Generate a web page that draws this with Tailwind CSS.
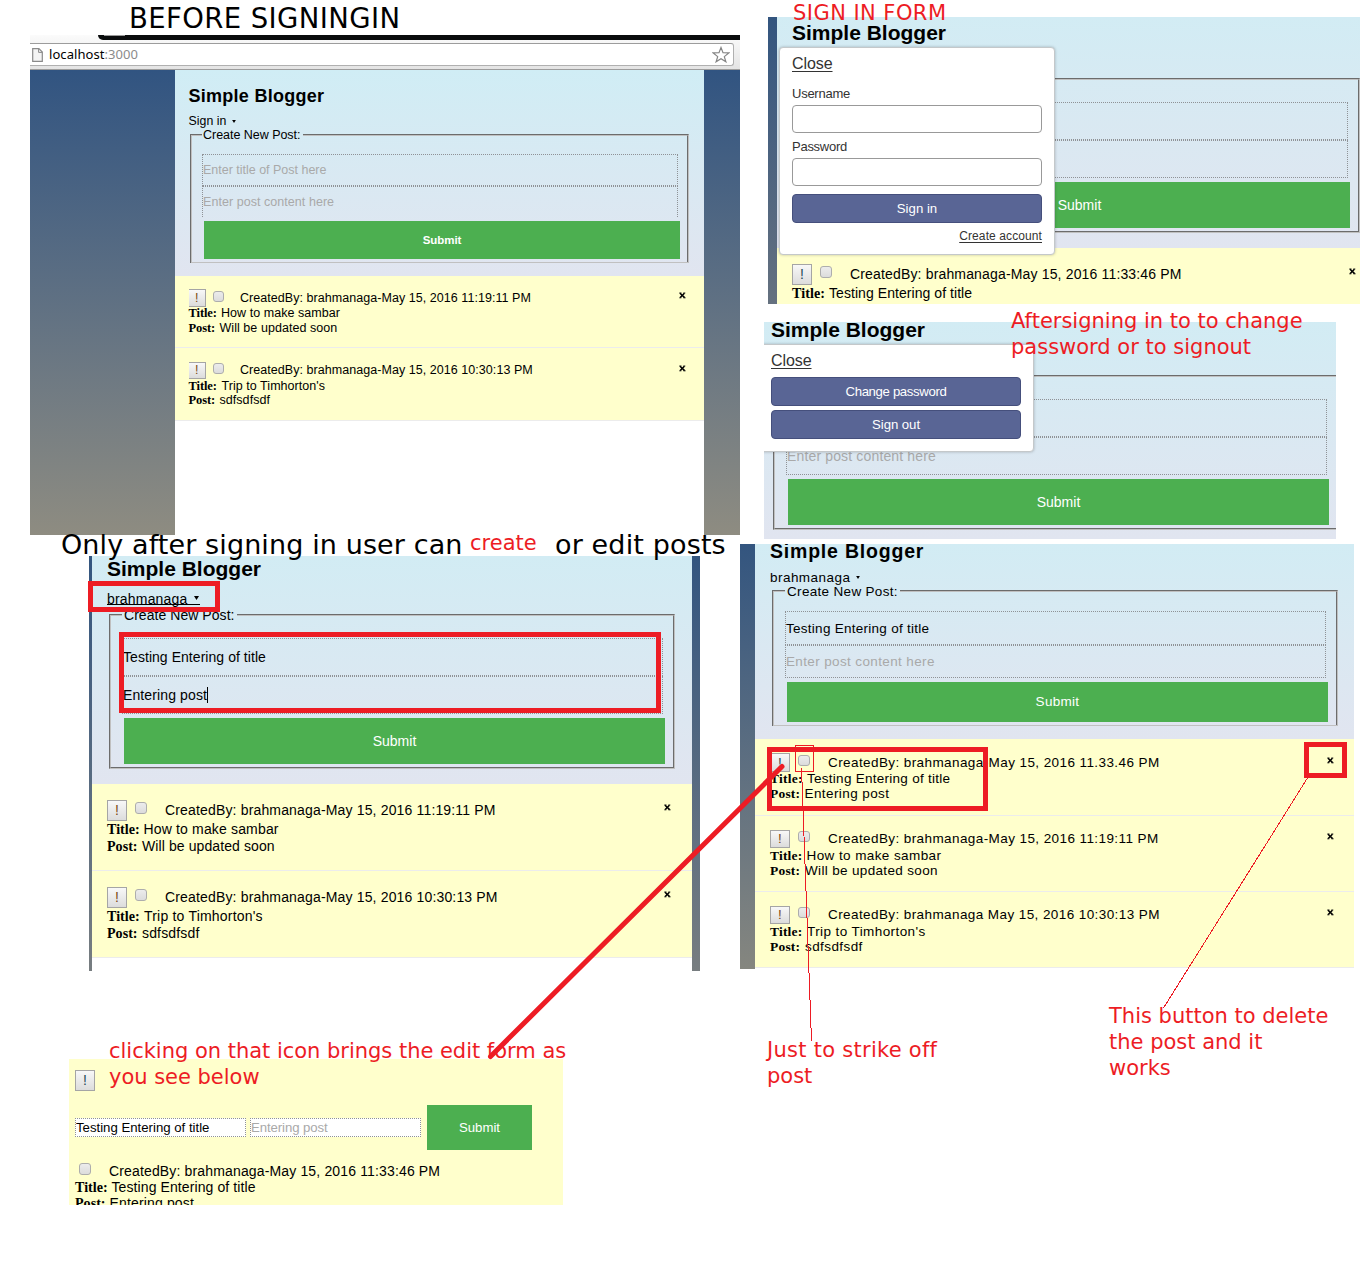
<!DOCTYPE html>
<html lang="en">
<head>
<meta charset="utf-8">
<title>Simple Blogger walkthrough</title>
<script src="https://cdn.jsdelivr.net/npm/@tailwindcss/browser@4"></script>
</head>
<body class="bg-white">
<svg class="hidden">
  <symbol id="x" viewBox="0 0 7 7"><path d="M1 1.2 L5.6 5.6 M5.4 1.2 L1.2 5.6" stroke="#000" stroke-width="1.5" fill="none"/><path d="M0.3 1h2.2M4.4 1h1.9M0.3 5.8h2.1M4.4 5.8h2.2" stroke="#000" stroke-width=".9"/></symbol>
  <symbol id="tri" viewBox="0 0 5 4"><path d="M0 0h5L2.5 4z" fill="#000"/></symbol>
</svg>
<main class="relative w-[1360px] h-[1285px] overflow-hidden bg-white text-black whitespace-nowrap font-['Liberation_Sans',sans-serif]">

  <!-- Before signing in -->
  <section class="absolute left-[30px] top-[35px] w-[710px] h-[500px] overflow-hidden flex flex-col text-[12.5px] tracking-[0.05px]">
    <div class="h-[35px] shrink-0 flex flex-col bg-linear-to-b from-[#fbfbfb] to-[#e4e4e4] border-b border-[#9d9d9d]">
      <div class="h-[5px] flex justify-end"><div class="w-[642px] h-[5px] bg-[#0a0c0d] rounded-bl-[5px]"><div class="ml-[6px] w-[21px] h-px bg-[#999]"></div></div></div>
      <div class="mt-[3px] -ml-2 w-[712px] h-[23px] bg-white border border-[#b0b0b0] border-t-[#9c9c9c] rounded-[3px] flex items-center pl-[9px] pr-[3px]">
        <svg class="w-[11px] h-[14px]" viewBox="0 0 11 14"><path d="M.7.7h6.2l3.4 3.4v9.2H.7z" fill="#f4f4f4" stroke="#8a8a8a" stroke-width="1.2"/><path d="M6.6.8v3.6h3.6" fill="none" stroke="#8a8a8a"/></svg>
        <span class="ml-[6px] -mt-[2px] font-['Noto_Sans',sans-serif] text-[13px] tracking-[0.06px] leading-[20px]">localhost<span class="text-[#8b8b8b]">:3000</span></span>
        <svg class="ml-auto w-[18px] h-[17px]" viewBox="0 0 18 17"><path d="M9 1.5l2 5.2 5.8.2-4.5 3.7 1.6 5.2L9 12.8l-4.9 3 1.6-5.2L1.2 6.9 7 6.7z" fill="none" stroke="#858585" stroke-width="1.2"/></svg>
      </div>
    </div>
    <div class="flex-1 bg-linear-to-b from-[#315481] to-[#8e8c81]">
      <div class="ml-[145px] w-[529px] h-full bg-white">
        <header class="h-[206px] pt-4 pl-[13px] bg-linear-to-b from-[#d0edf5] to-[#e1e5f0]">
          <h1 class="pl-[0.5px] font-bold text-[18px] tracking-[0.27px] leading-[21px]">Simple Blogger</h1>
          <div class="mt-[7px] pl-[0.5px] h-[14px] leading-[15px] flex items-center text-[12.3px]">Sign in<svg class="ml-[6px] w-[4px] h-[3px]"><use href="#tri"/></svg></div>
          <fieldset class="ml-[2px] w-[499px] h-[135px] border-2 border-b border-[#c0c0c0] [border-style:groove_groove_solid_groove]">
            <legend class="ml-[10px] pl-px w-[101px] h-[14px] leading-[14px] tracking-[-0.03px]">Create New Post:</legend>
            <div class="mt-3 ml-[10px] w-[476px] h-8 border border-dotted border-[#8f9296] leading-[31px] text-[#a9a9a9] tracking-[-0.01px]">Enter title of Post here</div>
            <div class="ml-[10px] w-[476px] h-[31px] border border-b-0 border-dotted border-[#8f9296] leading-[31px] text-[#a9a9a9]">Enter post content here</div>
            <div class="mt-1 ml-3 w-[476px] h-[38px] bg-[#4caf50] text-white text-center font-bold text-[11.5px] tracking-[-0.08px] leading-[38px]">Submit</div>
          </fieldset>
        </header>
        <article class="h-[72px] pt-[13px] pl-[13.5px] bg-[#ffffcc] border-b border-[#ececec]">
          <div class="flex h-[18px] leading-[18px]">
            <span class="w-[17.5px] h-[18px] border border-l-0 border-[#a5a5a5] bg-linear-to-b from-[#f8f8f8] to-[#dcdcdc] text-center leading-[16px] text-[#7a4a12]">!</span>
            <span class="ml-[7px] mt-[2px] w-[11px] h-[11px] rounded-[3px] border border-[#adadad] bg-linear-to-b from-[#ececec] to-[#dcdcdc]"></span>
            <span class="ml-[16px]">CreatedBy: brahmanaga-May 15, 2016 11:19:11 PM</span>
            <svg class="ml-auto mr-[18px] mt-[3px] w-[7px] h-[7px]"><use href="#x"/></svg>
          </div>
          <div class="-mt-[2px] flex h-[15px] leading-[16px]"><b class="w-[32.5px] font-['Liberation_Serif',serif] tracking-[-0.1px]">Title:</b>How to make sambar</div>
          <div class="flex h-[15px] leading-[16px]"><b class="w-[31px] font-['Liberation_Serif',serif] tracking-[-0.1px]">Post:</b>Will be updated soon</div>
        </article>
        <article class="h-[73px] pt-[14px] pl-[13.5px] bg-[#ffffcc] border-b border-[#ececec]">
          <div class="flex h-[18px] leading-[17px]">
            <span class="w-[17.5px] h-[17px] border border-l-0 border-[#a5a5a5] bg-linear-to-b from-[#f8f8f8] to-[#dcdcdc] text-center leading-[15px] text-[#7a4a12]">!</span>
            <span class="ml-[7px] mt-px w-[11px] h-[11px] rounded-[3px] border border-[#adadad] bg-linear-to-b from-[#ececec] to-[#dcdcdc]"></span>
            <span class="ml-[16px]">CreatedBy: brahmanaga-May 15, 2016 10:30:13 PM</span>
            <svg class="ml-auto mr-[18px] mt-[3px] w-[7px] h-[7px]"><use href="#x"/></svg>
          </div>
          <div class="-mt-[2px] flex h-[14px] leading-[16px]"><b class="w-[33px] font-['Liberation_Serif',serif] tracking-[-0.1px]">Title:</b>Trip to Timhorton's</div>
          <div class="flex h-[15px] leading-[16px]"><b class="w-[31px] font-['Liberation_Serif',serif] tracking-[-0.1px]">Post:</b>sdfsdfsdf</div>
        </article>
      </div>
    </div>
  </section>

  <!-- Sign in form -->
  <section class="absolute left-[768px] top-[17px] w-[592px] h-[287px] overflow-hidden pl-[9px] bg-linear-to-b from-[#33557f] to-[#65717f] text-[14px] tracking-[0.16px]">
    <header class="h-[231px] pt-1 pl-[15px] bg-linear-to-b from-[#d2ecf4] to-[#e1e5f0]">
      <h1 class="font-bold text-[21px] tracking-normal leading-[24px]">Simple Blogger</h1>
      <div class="mt-[33px] ml-[2px] w-[566px] h-[155px] border-2 border-[#c0c0c0] [border-style:groove] pt-[22px]">
        <div class="ml-[11px] w-[541px] h-[38px] border border-dotted border-[#8f9296]"></div>
        <div class="ml-[11px] w-[541px] h-[38px] border border-dotted border-[#8f9296]"></div>
        <div class="mt-1 ml-[13px] w-[541px] h-[46px] bg-[#4caf50] text-white text-center tracking-normal leading-[46px]">Submit</div>
      </div>
    </header>
    <article class="h-[56px] pt-4 pl-[15px] bg-[#ffffcc]">
      <div class="flex h-[21px] leading-[20px]">
        <span class="w-5 h-[21px] border border-[#a5a5a5] bg-linear-to-b from-[#f8f8f8] to-[#dcdcdc] text-center leading-[19px] text-[#1d4a55]">!</span>
        <span class="ml-2 mt-[2px] w-3 h-3 rounded-[3px] border border-[#adadad] bg-linear-to-b from-[#ececec] to-[#dcdcdc]"></span>
        <span class="ml-[18px]">CreatedBy: brahmanaga-May 15, 2016 11:33:46 PM</span>
        <svg class="ml-auto mr-1 mt-1 w-[7px] h-[7px]"><use href="#x"/></svg>
      </div>
      <div class="flex h-[17px] leading-[17px] tracking-[0.06px]"><b class="w-[37px] font-['Liberation_Serif',serif] text-[14.1px]">Title:</b>Testing Entering of title</div>
    </article>
  </section>
  <div class="absolute left-[779px] top-[47px] w-[276px] h-[208px] bg-white border border-[#c4c8ca] rounded-[4px] shadow-[0_0_3px_rgba(0,0,0,0.25)] px-3 pt-[6px] text-[#333]">
    <div class="text-[16px] leading-[19px] tracking-[-0.08px] underline underline-offset-2">Close</div>
    <div class="mt-[13px] text-[13px] tracking-[-0.25px] leading-[16px]">Username</div>
    <div class="mt-[3px] h-7 border border-[#999] rounded-[4px]"></div>
    <div class="mt-[6px] text-[13px] tracking-[-0.26px] leading-[16px]">Password</div>
    <div class="mt-[3px] h-7 border border-[#999] rounded-[4px]"></div>
    <div class="mt-2 h-[29px] border border-[#454f7c] rounded-[4px] bg-[#596595] text-white text-center text-[13.2px] leading-[27px]">Sign in</div>
    <div class="mt-[5px] text-right text-[12px] tracking-[0.1px] leading-[16px] underline underline-offset-2">Create account</div>
  </div>

  <!-- Signed-in account menu -->
  <section class="absolute left-[764px] top-[322px] w-[572px] h-[217px] overflow-hidden pl-[6px] bg-linear-to-b from-[#d2ecf4] to-[#e1e5f0] text-[14px] tracking-[0.15px]">
    <h1 class="-mt-[5px] pl-px font-bold text-[21px] tracking-normal leading-[25px]">Simple Blogger</h1>
    <div class="mt-[33px] ml-[3px] w-[575px] h-[155px] border-2 border-[#c0c0c0] [border-style:groove] pt-[22px]">
      <div class="ml-[11px] w-[541px] h-[38px] border border-dotted border-[#8f9296]"></div>
      <div class="ml-[11px] w-[541px] h-[38px] border border-dotted border-[#8f9296] leading-[37px] text-[#a9a9a9]">Enter post content here</div>
      <div class="mt-1 ml-[13px] w-[541px] h-[46px] bg-[#4caf50] text-white text-center tracking-normal leading-[46px]">Submit</div>
    </div>
    <div class="absolute -left-[6px] top-[22px] w-[276px] h-[108px] bg-white border border-[#c4c8ca] rounded-[4px] shadow-[0_0_3px_rgba(0,0,0,0.25)] px-3 pt-[6px] text-[#333]">
      <div class="text-[16px] leading-[19px] tracking-[-0.08px] underline underline-offset-2">Close</div>
      <div class="mt-[7px] h-[29px] border border-[#454f7c] rounded-[4px] bg-[#596595] text-white text-center text-[13.2px] tracking-[-0.35px] leading-[27px]">Change password</div>
      <div class="mt-1 h-[29px] border border-[#454f7c] rounded-[4px] bg-[#596595] text-white text-center text-[13.2px] tracking-[-0.05px] leading-[27px]">Sign out</div>
    </div>
  </section>

  <!-- Creating a post -->
  <section class="absolute left-[89px] top-[556px] w-[611px] h-[415px] overflow-hidden pl-[3px] pr-2 bg-linear-to-b from-[#33557f] to-[#777d80] text-[14px] tracking-[0.16px]">
    <div class="h-full bg-white">
      <header class="h-[228px] pl-[15px] bg-linear-to-b from-[#d2ecf4] to-[#e1e5f0]">
        <h1 class="font-bold text-[21px] tracking-normal leading-[25px]">Simple Blogger</h1>
        <div class="mt-[9px] h-[18px] flex"><span class="h-[15px] w-[93px] pt-[3px] leading-[18px] border-b border-black flex items-center tracking-[0.19px]">brahmanaga<svg class="ml-[6px] -mt-px w-[5px] h-[4px]"><use href="#tri"/></svg></span></div>
        <fieldset class="-mt-[2px] ml-[2px] w-[566px] h-[163px] border-2 border-[#c0c0c0] [border-style:groove]">
          <legend class="ml-[11px] pl-[2px] w-[115px] h-[18px] leading-[18px] tracking-[0.05px]">Create New Post:</legend>
          <div class="mt-[14px] ml-[11px] w-[541px] h-[38px] border border-dotted border-[#8f9296] leading-[36px] tracking-[0.05px]">Testing Entering of title</div>
          <div class="ml-[11px] w-[541px] h-[38px] border border-dotted border-[#8f9296] leading-[37px] flex items-center"><span class="h-4 leading-4 border-r border-black tracking-[0.12px]">Entering post</span></div>
          <div class="mt-1 ml-[13px] w-[541px] h-[46px] bg-[#4caf50] text-white text-center tracking-normal leading-[46px]">Submit</div>
        </fieldset>
      </header>
      <article class="h-[87px] pt-4 pl-[15px] bg-[#ffffcc] border-b border-[#ececec]">
        <div class="flex h-[21px] leading-[20px]">
          <span class="w-5 h-[21px] border border-[#a5a5a5] bg-linear-to-b from-[#f8f8f8] to-[#dcdcdc] text-center leading-[19px] text-[#7a4a12]">!</span>
          <span class="ml-2 mt-[2px] w-3 h-3 rounded-[3px] border border-[#adadad] bg-linear-to-b from-[#ececec] to-[#dcdcdc]"></span>
          <span class="ml-[18px]">CreatedBy: brahmanaga-May 15, 2016 11:19:11 PM</span>
          <svg class="ml-auto mr-[21px] mt-1 w-[7px] h-[7px]"><use href="#x"/></svg>
        </div>
        <div class="flex h-[17px] leading-[17px]"><b class="w-[36.5px] font-['Liberation_Serif',serif] text-[14.1px] tracking-normal">Title:</b>How to make sambar</div>
        <div class="flex h-[17px] leading-[17px]"><b class="w-[35px] font-['Liberation_Serif',serif] text-[14.1px] tracking-normal">Post:</b><span class="tracking-[0.1px]">Will be updated soon</span></div>
      </article>
      <article class="h-[87px] pt-4 pl-[15px] bg-[#ffffcc] border-b border-[#ececec]">
        <div class="flex h-[21px] leading-[20px]">
          <span class="w-5 h-[21px] border border-[#a5a5a5] bg-linear-to-b from-[#f8f8f8] to-[#dcdcdc] text-center leading-[19px] text-[#7a4a12]">!</span>
          <span class="ml-2 mt-[2px] w-3 h-3 rounded-[3px] border border-[#adadad] bg-linear-to-b from-[#ececec] to-[#dcdcdc]"></span>
          <span class="ml-[18px]">CreatedBy: brahmanaga-May 15, 2016 10:30:13 PM</span>
          <svg class="ml-auto mr-[21px] mt-1 w-[7px] h-[7px]"><use href="#x"/></svg>
        </div>
        <div class="flex h-[17px] leading-[17px]"><b class="w-[37px] font-['Liberation_Serif',serif] text-[14.1px] tracking-normal">Title:</b><span class="tracking-[0.2px]">Trip to Timhorton's</span></div>
        <div class="flex h-[17px] leading-[17px]"><b class="w-[35px] font-['Liberation_Serif',serif] text-[14.1px] tracking-normal">Post:</b>sdfsdfsdf</div>
      </article>
    </div>
  </section>

  <!-- Post list after creating -->
  <section class="absolute left-[740px] top-[544px] w-[614px] h-[425px] overflow-hidden pl-[15px] bg-linear-to-b from-[#33557f] to-[#85867f] text-[13.5px] tracking-[0.41px]">
    <div class="h-full bg-white">
      <header class="h-[195px] pl-[15px] bg-linear-to-b from-[#d2ecf4] to-[#e1e5f0] flow-root">
        <h1 class="-mt-[3px] font-bold text-[19.5px] tracking-[0.8px] leading-5">Simple Blogger</h1>
        <div class="mt-[9px] h-[14px] leading-[15px] flex items-center tracking-[0.46px]">brahmanaga<svg class="ml-[6px] w-[4px] h-[3px]"><use href="#tri"/></svg></div>
        <fieldset class="-mt-px ml-[2px] w-[566px] h-[143px] border-2 border-b border-[#c0c0c0] [border-style:groove_groove_solid_groove]">
          <legend class="ml-[11px] pl-[2px] w-[115px] h-4 leading-[17px] tracking-[0.32px]">Create New Post:</legend>
          <div class="mt-3 ml-[11px] w-[541px] h-[34px] border border-dotted border-[#8f9296] leading-[33px] tracking-[0.27px]">Testing Entering of title</div>
          <div class="ml-[11px] w-[541px] h-[33px] border border-dotted border-[#8f9296] leading-[32px] text-[#a9a9a9] tracking-[0.37px]">Enter post content here</div>
          <div class="mt-1 ml-[13px] w-[541px] h-10 bg-[#4caf50] text-white text-center leading-10 tracking-[0.3px]">Submit</div>
        </fieldset>
      </header>
      <article class="h-[77px] pt-[14px] pl-[15px] bg-[#ffffcc] border-b border-[#ececec]">
        <div class="flex h-[19px] leading-[19px]">
          <span class="w-5 h-[19px] border border-[#a5a5a5] bg-linear-to-b from-[#f8f8f8] to-[#dcdcdc] text-center leading-[17px] text-[#1d4a55]">!</span>
          <span class="ml-2 mt-[2px] w-3 h-[11px] rounded-[3px] border border-[#adadad] bg-linear-to-b from-[#ececec] to-[#dcdcdc]"></span>
          <span class="ml-[18px]">CreatedBy: brahmanaga-May 15, 2016 11.33.46 PM</span>
          <svg class="ml-auto mr-5 mt-1 w-[7px] h-[7px]"><use href="#x"/></svg>
        </div>
        <div class="-mt-px flex h-[15px] leading-[15px] tracking-[0.27px]"><b class="w-[37px] font-['Liberation_Serif',serif]">Title:</b>Testing Entering of title</div>
        <div class="flex h-[15px] leading-[15px]"><b class="w-[34.5px] font-['Liberation_Serif',serif] tracking-[0.2px]">Post:</b>Entering post</div>
      </article>
      <article class="h-[76px] pt-[14px] pl-[15px] bg-[#ffffcc] border-b border-[#ececec]">
        <div class="flex h-[19px] leading-[18px]">
          <span class="w-5 h-[18px] border border-[#a5a5a5] bg-linear-to-b from-[#f8f8f8] to-[#dcdcdc] text-center leading-[16px] text-[#7a4a12]">!</span>
          <span class="ml-2 mt-px w-3 h-[11px] rounded-[3px] border border-[#adadad] bg-linear-to-b from-[#ececec] to-[#dcdcdc]"></span>
          <span class="ml-[18px]">CreatedBy: brahmanaga-May 15, 2016 11:19:11 PM</span>
          <svg class="ml-auto mr-5 mt-[3px] w-[7px] h-[7px]"><use href="#x"/></svg>
        </div>
        <div class="-mt-px flex h-[15px] leading-[15px]"><b class="w-[36.5px] font-['Liberation_Serif',serif] tracking-[0.2px]">Title:</b>How to make sambar</div>
        <div class="flex h-[15px] leading-[15px]"><b class="w-[35px] font-['Liberation_Serif',serif] tracking-[0.2px]">Post:</b><span class="tracking-[0.34px]">Will be updated soon</span></div>
      </article>
      <article class="h-[76px] pt-[14px] pl-[15px] bg-[#ffffcc] border-b border-[#ececec]">
        <div class="flex h-[19px] leading-[18px]">
          <span class="w-5 h-[18px] border border-[#a5a5a5] bg-linear-to-b from-[#f8f8f8] to-[#dcdcdc] text-center leading-[16px] text-[#7a4a12]">!</span>
          <span class="ml-2 mt-px w-3 h-[11px] rounded-[3px] border border-[#adadad] bg-linear-to-b from-[#ececec] to-[#dcdcdc]"></span>
          <span class="ml-[18px]">CreatedBy: brahmanaga May 15, 2016 10:30:13 PM</span>
          <svg class="ml-auto mr-5 mt-[3px] w-[7px] h-[7px]"><use href="#x"/></svg>
        </div>
        <div class="-mt-px flex h-[15px] leading-[15px]"><b class="w-[37px] font-['Liberation_Serif',serif] tracking-[0.2px]">Title:</b>Trip to Timhorton's</div>
        <div class="flex h-[15px] leading-[15px]"><b class="w-[35px] font-['Liberation_Serif',serif] tracking-[0.2px]">Post:</b>sdfsdfsdf</div>
      </article>
    </div>
  </section>

  <!-- Edit form -->
  <section class="absolute left-[69px] top-[1059px] w-[494px] h-[146px] overflow-hidden pl-[6px] pt-[11px] bg-[#ffffcc] text-[14px] tracking-[0.15px]">
    <div class="w-5 h-[21px] border border-[#a5a5a5] bg-linear-to-b from-[#f8f8f8] to-[#dcdcdc] text-center leading-[19px] text-[#1d4a55]">!</div>
    <div class="mt-[14px] h-[45px] flex items-center text-[13.2px] tracking-normal">
      <div class="w-[171px] h-[19px] bg-white border border-dotted border-[#8f9296] leading-[17px]">Testing Entering of title</div>
      <div class="ml-1 w-[171px] h-[19px] bg-white border border-dotted border-[#8f9296] leading-[17px] tracking-[-0.08px] text-[#a9a9a9]">Entering post</div>
      <div class="ml-[6px] w-[105px] h-[45px] bg-[#4caf50] text-white text-center leading-[45px]">Submit</div>
    </div>
    <div class="mt-[13px] h-4 flex leading-[16px]">
      <span class="ml-1 w-3 h-3 rounded-[3px] border border-[#adadad] bg-linear-to-b from-[#ececec] to-[#dcdcdc]"></span>
      <span class="ml-[18px]">CreatedBy: brahmanaga-May 15, 2016 11:33:46 PM</span>
    </div>
    <div class="h-4 flex leading-[17px] tracking-[0.1px]"><b class="w-[36.5px] font-['Liberation_Serif',serif] text-[14.1px] tracking-normal">Title:</b>Testing Entering of title</div>
    <div class="h-4 flex leading-[17px]"><b class="w-[34.5px] font-['Liberation_Serif',serif] text-[14.1px] tracking-normal">Post:</b>Entering post</div>
  </section>

  <!-- Annotations -->
  <div class="font-['DejaVu_Sans',sans-serif] text-[21px] leading-[26px] text-[#ed1c24]">
    <p class="absolute left-[129px] top-[2px] text-[27.5px] leading-[33px] tracking-[0.4px] text-black">BEFORE SIGNINGIN</p>
    <p class="absolute left-[61px] top-[528px] text-[27px] leading-[33px] tracking-[0.11px] text-black">Only after signing in user can</p>
    <p class="absolute left-[555px] top-[528px] text-[27px] leading-[33px] tracking-[0.14px] text-black">or edit posts</p>
    <p class="absolute left-[470px] top-[530px]">create</p>
    <p class="absolute left-[793px] top-0 tracking-[0.45px]">SIGN IN FORM</p>
    <p class="absolute left-[1011px] top-[308px]">Aftersigning in to to change<br>password or to signout</p>
    <p class="absolute left-[109px] top-[1038px] tracking-[-0.02px]">clicking on that icon brings the edit form as<br>you see below</p>
    <p class="absolute left-[767px] top-[1037px]"><span class="tracking-[0.27px]">Just to strike off</span><br>post</p>
    <p class="absolute left-[1109px] top-[1003px]">This button to delete<br>the post and it<br>works</p>
  </div>
  <svg class="absolute left-0 top-0 w-[1360px] h-[1285px]" fill="none" stroke="#ed1c24" shape-rendering="crispEdges">
    <g stroke-width="5">
      <rect x="90.5" y="583.5" width="127" height="26"/>
      <rect x="121.5" y="634.5" width="537" height="76"/>
      <rect x="769.5" y="749.5" width="216" height="59"/>
      <rect x="1306.5" y="744.5" width="38" height="31"/>
      <path d="M782 766.500L490.500 1056.500" stroke-linecap="round" shape-rendering="geometricPrecision"/>
    </g>
    <rect x="795.5" y="745.5" width="18" height="26"/>
    <path d="M801.500 768L811.500 1041M1307.500 778L1163.500 1008"/>
  </svg>
</main>
</body>
</html>
